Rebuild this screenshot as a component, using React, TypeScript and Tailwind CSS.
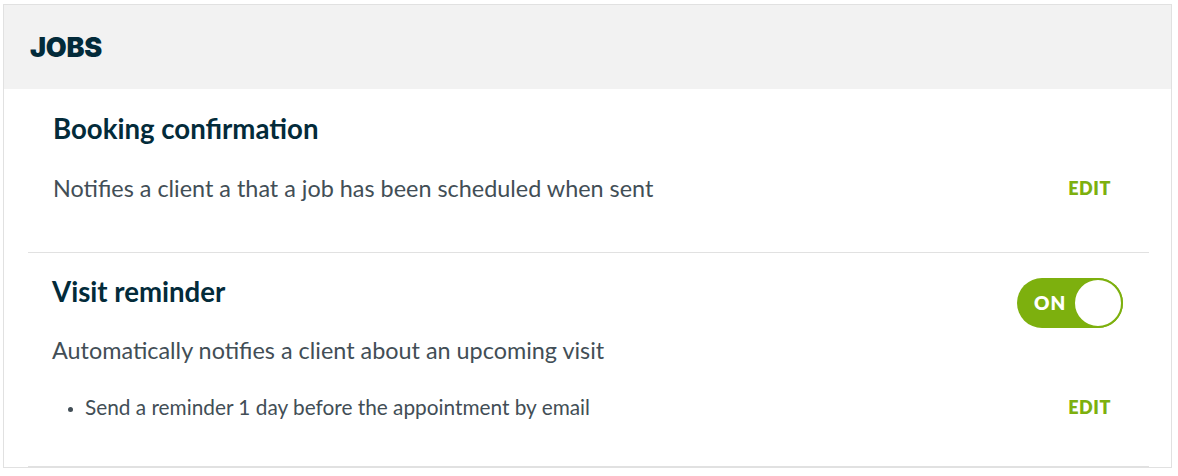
import { useState } from 'react';

const font = { fontFamily: 'Lato, "Open Sans", sans-serif' };

function EditLink() {
  return (
    <button className="text-[18px] font-extrabold tracking-[0.03em] text-[#7db00e] uppercase leading-none">
      Edit
    </button>
  );
}

function Toggle() {
  const [on, setOn] = useState(true);
  return (
    <button
      onClick={() => setOn(!on)}
      className="relative mt-[3px] w-[106px] h-[50px] rounded-full bg-[#7db00e] flex items-center shrink-0"
    >
      <span className="pl-[17px] text-[19px] font-extrabold tracking-[0.05em] text-white">ON</span>
      <span className="absolute right-0 top-0 w-[50px] h-[50px] rounded-full bg-white border-2 border-[#7db00e]" />
    </button>
  );
}

export default function App() {
  return (
    <div className="w-[1178px] h-[476px] bg-white pl-[3px] pt-[4px] overflow-hidden" style={font}>
      <div className="w-[1169px] border border-[#e1e1e1] bg-white">
        {/* Section header */}
        <div className="h-[84px] bg-[#f2f2f2] px-[26px] flex items-center">
          <h2
            className="text-[27px] font-black tracking-[-0.01em] text-[#032b3a] pt-[2px]"
            style={{ fontFamily: 'Inter, sans-serif' }}
          >
            JOBS
          </h2>
        </div>

        <div className="pl-[24px] pr-[22px]">
          {/* Booking confirmation */}
          <div className="border-b border-[#e1e1e1] pt-[23px] pb-[49px] pl-[25px] pr-[38px]">
            <h3 className="text-[27.6px] font-bold text-[#032b3a] leading-[34px]">Booking confirmation</h3>
            <div className="flex items-center justify-between mt-[27px] h-[30px]">
              <p className="text-[23.4px] text-[#424e56] leading-[30px]">
                Notifies a client a that a job has been scheduled when sent
              </p>
              <EditLink />
            </div>
          </div>

          {/* Visit reminder */}
          <div className="border-b border-[#e1e1e1] pt-[22px] pb-[45px] pl-[24px] pr-[26px]">
            <div className="flex items-start justify-between">
              <h3 className="text-[27.6px] font-bold text-[#032b3a] leading-[34px]">Visit reminder</h3>
              <Toggle />
            </div>
            <p className="text-[23.4px] text-[#424e56] leading-[30px] mt-[7px]">
              Automatically notifies a client about an upcoming visit
            </p>
            <div className="flex items-center justify-between mt-[28px] h-[28px] pr-[12px]">
              <ul className="list-disc pl-[33px] text-[20.8px] text-[#424e56] leading-[28px] marker:text-[15px]">
                <li>Send a reminder 1 day before the appointment by email</li>
              </ul>
              <EditLink />
            </div>
          </div>
        </div>
      </div>
    </div>
  );
}
